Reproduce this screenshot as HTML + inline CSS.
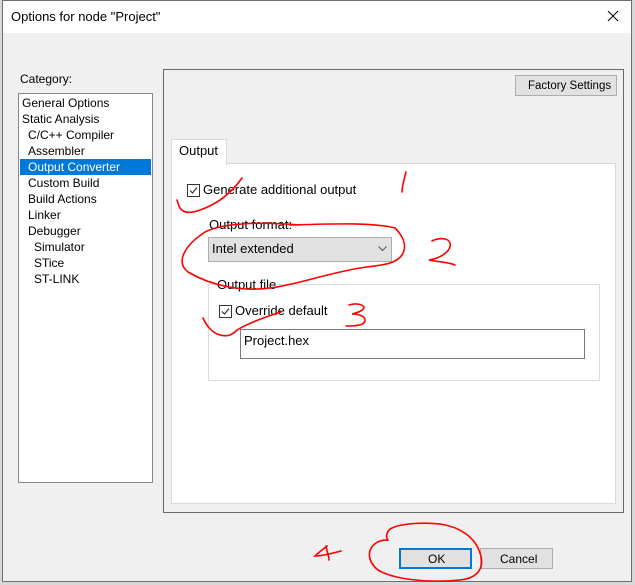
<!DOCTYPE html>
<html><head><meta charset="utf-8"><style>
*{margin:0;padding:0;box-sizing:border-box}
body{width:635px;height:585px;background:#d8d8d8;position:relative;overflow:hidden;font-family:"Liberation Sans",sans-serif;font-size:12px;color:#000}
.a{position:absolute}
.t{position:absolute;white-space:nowrap;line-height:14px}
</style></head><body>
<div class="a" style="left:2px;top:0;width:630px;height:582px;background:#f0f0f0;border:1px solid #6f6f6f"></div>
<div class="a" style="left:3px;top:1px;width:628px;height:32px;background:#fff"></div>
<div class="t" style="left:11px;top:10px;font-size:13px">Options for node "Project"</div>
<svg class="a" style="left:607px;top:10px" width="12" height="12"><path d="M1 1L11 11M11 1L1 11" stroke="#000" stroke-width="1"/></svg>

<div class="t" style="left:20px;top:72px">Category:</div>
<div class="a" style="left:18px;top:93px;width:135px;height:390px;background:#fff;border:1px solid #828790"></div>
<div class="a" style="left:20px;top:159px;width:131px;height:16px;background:#0078d7"></div>
<div class="t" style="left:22px;top:96px">General Options</div>
<div class="t" style="left:22px;top:112px">Static Analysis</div>
<div class="t" style="left:28px;top:128px">C/C++ Compiler</div>
<div class="t" style="left:28px;top:144px">Assembler</div>
<div class="t" style="left:28px;top:160px;color:#fff">Output Converter</div>
<div class="t" style="left:28px;top:176px">Custom Build</div>
<div class="t" style="left:28px;top:192px">Build Actions</div>
<div class="t" style="left:28px;top:208px">Linker</div>
<div class="t" style="left:28px;top:224px">Debugger</div>
<div class="t" style="left:34px;top:240px">Simulator</div>
<div class="t" style="left:34px;top:256px">STice</div>
<div class="t" style="left:34px;top:272px">ST-LINK</div>

<div class="a" style="left:163px;top:69px;width:461px;height:444px;border:1px solid #696969"></div>
<div class="a" style="left:515px;top:75px;width:102px;height:21px;background:#e1e1e1;border:1px solid #adadad"></div>
<div class="t" style="left:528px;top:79px;font-size:11.5px">Factory Settings</div>

<div class="a" style="left:171px;top:163px;width:445px;height:341px;background:#fff;border:1px solid #d9d9d9"></div>
<div class="a" style="left:171px;top:139px;width:56px;height:26px;background:#fff;border:1px solid #d9d9d9;border-bottom:none"></div>
<div class="t" style="left:179px;top:144px;font-size:13px">Output</div>

<div class="a" style="left:187px;top:184px;width:13px;height:13px;border:1px solid #333;background:#fff"></div>
<svg class="a" style="left:188px;top:185px" width="11" height="11"><path d="M2 5.5L4.5 8L9 2.5" stroke="#333" fill="none" stroke-width="1.2"/></svg>
<div class="t" style="left:203px;top:183px;font-size:13px">Generate additional output</div>

<div class="t" style="left:209px;top:218px;font-size:13px">Output format:</div>
<div class="a" style="left:208px;top:237px;width:184px;height:25px;background:#e1e1e1;border:1px solid #adadad"></div>
<div class="t" style="left:212px;top:242px;font-size:13px">Intel extended</div>
<svg class="a" style="left:378px;top:246px" width="9" height="6"><path d="M0.5 0.5L4.5 4.5L8.5 0.5" stroke="#555" fill="none"/></svg>

<div class="a" style="left:208px;top:284px;width:392px;height:97px;border:1px solid #dcdcdc"></div>
<div class="t" style="left:215px;top:278px;font-size:13px;background:#fff;padding:0 2px">Output file</div>
<div class="a" style="left:219px;top:305px;width:13px;height:13px;border:1px solid #333;background:#fff"></div>
<svg class="a" style="left:220px;top:306px" width="11" height="11"><path d="M2 5.5L4.5 8L9 2.5" stroke="#333" fill="none" stroke-width="1.2"/></svg>
<div class="t" style="left:235px;top:304px;font-size:13px">Override default</div>
<div class="a" style="left:240px;top:329px;width:345px;height:30px;border:1px solid #7a7a7a;background:#fff"></div>
<div class="t" style="left:244px;top:334px;font-size:13px">Project.hex</div>

<div class="a" style="left:399px;top:548px;width:73px;height:21px;background:#e1e1e1;border:2px solid #0078d7"></div>
<div class="t" style="left:428px;top:552px">OK</div>
<div class="a" style="left:480px;top:548px;width:73px;height:21px;background:#e1e1e1;border:1px solid #adadad"></div>
<div class="t" style="left:500px;top:552px">Cancel</div>

<svg class="a" style="left:0;top:0" width="635" height="585" fill="none" stroke="#f00" stroke-width="1.6" stroke-linecap="round">
<path d="M242 178C232 192 218 204 200 210C192 213 184 214 180 208C178 205 178 202 177 200"/>
<path d="M406 172C404 180 402 186 402 192"/>
<path d="M300 225C265 222 225 222 205 232C185 245 175 262 188 272C210 285 240 292 270 288C300 284 320 275 360 268C380 265 395 265 402 255C408 245 402 235 395 228C370 222 330 224 290 225"/>
<path d="M432 241C438 238 448 237 450 243C452 250 442 258 429 260C438 262 448 262 455 265"/>
<path d="M281 312C262 318 245 325 237 330C232 335 228 337 220 335C212 333 206 325 203 318"/>
<path d="M349 305C356 303 362 304 364 307C364 311 356 313 352 314C358 314 366 316 365 321C364 325 358 326 346 326"/>
<path d="M327 546C322 550 318 553 315 556C320 556 330 554 341 551M326 546C327 552 329 556 329 560"/>
<path d="M388 540C385 537 387 530 392 528C400 524 420 522 440 524C460 527 475 537 480 553C485 568 478 578 460 580C430 583 395 580 378 570C368 562 366 550 376 543C380 540 386 540 388 540"/>
</svg>
</body></html>
